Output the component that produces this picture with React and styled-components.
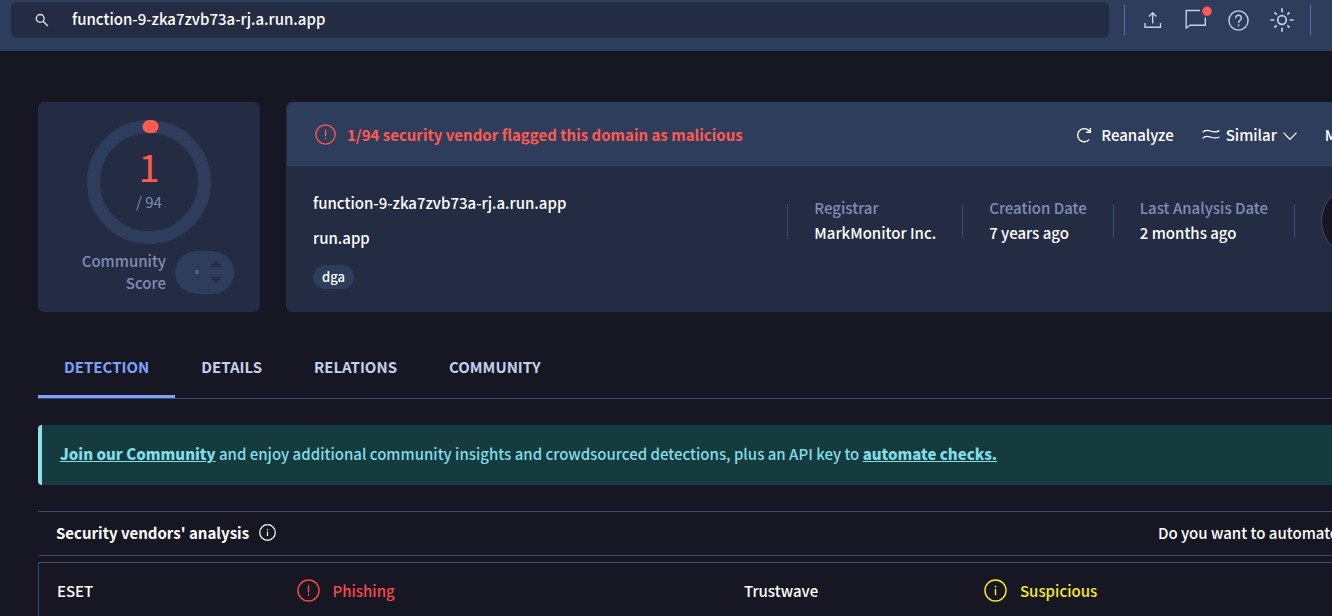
import React from "react";
import styled, { createGlobalStyle, css } from "styled-components";

const color = {
  page: "#171723",
  panel: "#242c43",
  bar: "#2e3d5c",
  line: "#3e4a69",
  muted: "#7f8db3",
  soft: "#c3cfeb",
  accent: "#7ea2fb",
  red: "#ff5a50",
  redText: "#f8474b",
  yellow: "#f7ea2d",
  teal: "#163b3e",
  tealText: "#83dde5",
};

const GlobalStyle = createGlobalStyle`
  * { box-sizing: border-box; }
  body {
    margin: 0;
    background: ${color.page};
    color: #fff;
    font-family: "Noto Sans CJK SC", "Noto Sans", sans-serif;
    font-size: 15px;
    font-weight: 500;
    line-height: 24px;
    overflow-x: hidden;
  }
  button, input { font: inherit; color: inherit; }
  svg { display: block; flex: none; }
`;

const Header = styled.header`
  display: flex;
  align-items: center;
  gap: 15px;
  padding: 2px 21px 13px 11px;
  background: ${color.bar};
`;

const SearchBox = styled.label`
  flex: 1;
  display: flex;
  align-items: center;
  gap: 23px;
  height: 36px;
  padding: 0 24px;
  border-radius: 6px;
  background: ${color.panel};
`;

const SearchInput = styled.input`
  flex: 1;
  min-width: 0;
  padding: 0 0 2px;
  border: 0;
  outline: 0;
  background: transparent;
`;

const HeaderActions = styled.div`
  display: flex;
  align-items: center;
  justify-content: space-between;
  width: 187px;
  height: 30px;
  padding: 0 16px 0 19px;
  border: solid #5f73a8;
  border-width: 0 1px;
  color: ${color.soft};
`;

const IconButton = styled.button`
  display: flex;
  padding: 0;
  border: 0;
  background: none;
  cursor: pointer;
`;

const Clip = styled.div`
  overflow: hidden;
`;

const Main = styled.main`
  width: calc(100% + 120px);
  padding: 51px 38px 0;
`;

const Summary = styled.section`
  display: flex;
  gap: 26px;
`;

const ScoreCard = styled.div`
  flex: none;
  width: 222px;
  height: 210px;
  padding: 18px 26px;
  border-radius: 6px;
  background: ${color.panel};
`;

const Gauge = styled.div`
  display: grid;
  place-items: center;
  > * { grid-area: 1 / 1; }
`;

const GaugeText = styled.div`
  display: flex;
  flex-direction: column;
  align-items: center;
  gap: 2px;
  padding-bottom: 6px;
  color: ${color.muted};
  font-weight: 400;
`;

const GaugeValue = styled.span`
  color: ${color.red};
  font-size: 38px;
  line-height: 44px;
`;

const Community = styled.div`
  display: flex;
  align-items: center;
  justify-content: flex-end;
  gap: 9px;
  margin-top: 6px;
  color: ${color.muted};
  line-height: 22px;
  text-align: right;
`;

const Votes = styled.div`
  display: flex;
  align-items: center;
  gap: 11px;
  width: 59px;
  height: 43px;
  padding-left: 20px;
  border-radius: 22px;
  background: ${color.bar};
`;

const Dot = styled.span`
  width: 4px;
  height: 4px;
  border-radius: 50%;
  background: #5c6880;
`;

const DetailCard = styled.div`
  flex: 1;
  border: 1px solid ${color.bar};
  border-color: ${color.bar} ${color.panel} ${color.panel};
  border-radius: 6px;
  background: ${color.panel};
`;

const DetailHeader = styled.div`
  display: flex;
  align-items: center;
  justify-content: space-between;
  height: 63px;
  padding: 0 32px 0 28px;
  border-radius: 5px 5px 0 0;
  background: ${color.bar};
  line-height: 22px;
`;

const Verdict = styled.div`
  display: flex;
  align-items: center;
  gap: 11px;
  color: ${color.red};
  font-weight: 700;
`;

const Actions = styled.div`
  display: flex;
  gap: 28px;
`;

const ActionButton = styled.button`
  display: flex;
  align-items: center;
  gap: ${(p) => p.$gap}px;
  padding: 0;
  border: 0;
  background: none;
  cursor: pointer;
`;

const DetailBody = styled.div`
  display: flex;
  justify-content: space-between;
  padding: 25px 20px 0 26px;
`;

const Domain = styled.div`
  display: flex;
  flex-direction: column;
  align-items: flex-start;
  gap: 11px;
`;

const Tag = styled.span`
  margin-top: 4px;
  padding: 0 9px;
  border-radius: 12px;
  background: ${color.bar};
  font-size: 13px;
`;

const Facts = styled.div`
  display: flex;
  align-items: center;
  gap: 26px;
  height: 60px;
`;

const Rule = styled.span`
  width: 1px;
  height: 35px;
  background: ${color.line};
`;

const Fact = styled.div`
  padding-bottom: 2px;
  line-height: 25px;
`;

const FactLabel = styled.div`
  color: ${color.muted};
`;

const TypeBadge = styled.div`
  width: 72px;
  height: 72px;
  border: 1px solid ${color.line};
  border-radius: 50%;
  background: ${color.page};
`;

const Tabs = styled.nav`
  display: flex;
  margin-top: 25px;
  border-bottom: 1px solid ${color.line};
`;

const Tab = styled.a`
  height: 61px;
  padding: 18px 26px 0;
  color: ${color.soft};
  font-weight: 700;
  text-decoration: none;
  ${(p) =>
    p.$active &&
    css`
      border-bottom: 3px solid ${color.accent};
      color: ${color.accent};
    `}
`;

const Banner = styled.p`
  margin: 26px 0;
  padding: 17px 18px 19px;
  border-left: 4px solid #90dfe6;
  border-radius: 4px;
  background: ${color.teal};
  color: ${color.tealText};
  white-space: nowrap;
`;

const BannerLink = styled.a`
  color: inherit;
  font-weight: 900;
  text-decoration: underline;
`;

const SectionHeader = styled.div`
  display: flex;
  align-items: center;
  justify-content: space-between;
  height: 45px;
  padding: 0 16px 2px 18px;
  border: solid ${color.line};
  border-width: 1px 0;
  line-height: 22px;
`;

const SectionTitle = styled.h2`
  display: flex;
  align-items: center;
  gap: 10px;
  margin: 0;
  font-size: 15px;
  font-weight: 700;
`;

const Results = styled.table`
  width: 100%;
  margin-top: 6px;
  border: 1px solid ${color.line};
  border-collapse: collapse;
  table-layout: fixed;
`;

const Cell = styled.td`
  width: ${(p) => (p.$name ? "240px" : "auto")};
  height: 56px;
  padding: 0 18px;
`;

const Status = styled.span`
  display: flex;
  align-items: center;
  gap: 13px;
  color: ${(p) => p.$color};
`;

const CircleIcon = ({ size, info, width = 1.5 }) => (
  <svg width={size} height={size} viewBox="0 0 24 24" fill="none" stroke="currentColor" strokeWidth={width}>
    <circle cx="12" cy="12" r="11" />
    {info ? <path d="M12 10.5v6.5M12 7v1.8" /> : <path d="M12 6.5v7.5M12 15.6v1.8" />}
  </svg>
);

const Chevron = () => (
  <svg width="14" height="12" viewBox="0 0 14 12" fill="none" stroke="currentColor" strokeWidth="1.2">
    <path d="M.5 3.600 7 10.300l6.500-6.700" />
  </svg>
);

const SearchIcon = () => (
  <svg width="14" height="14" viewBox="0 0 14 14" fill="none" stroke="#e6ebf7" strokeWidth="1.3">
    <circle cx="5.2" cy="5.4" r="3.9" />
    <path d="m8.1 8.3 4.7 4.7" />
  </svg>
);

const UploadIcon = () => (
  <svg width="20" height="20" viewBox="0 0 20 20" fill="none" stroke="currentColor" strokeWidth="1.4">
    <path d="M1 13v4.300h15.500V13M8.700 13.500V3M5 6.500 8.700 2.800l3.700 3.700" />
  </svg>
);

const MessageIcon = () => (
  <svg width="21" height="28" viewBox="0 0 21 28" fill="none" stroke="currentColor" strokeWidth="1.4" overflow="visible">
    <path d="M15 4.500H1.200v17.700L5 19.300h15.300V11.500" />
    <circle cx="22" cy="5.300" r="4.700" fill={color.red} stroke="none" />
  </svg>
);

const HelpIcon = () => (
  <svg width="21" height="21" viewBox="0 0 21 21" fill="none" stroke="currentColor" strokeWidth="1.4">
    <circle cx="10.5" cy="10.5" r="9.6" />
    <path d="M7.6 8.2c0-1.9 1.2-3 2.9-3s2.9 1.1 2.9 2.8c0 2.3-2.8 2.3-2.8 4.9M10.6 14.6v1.7" />
  </svg>
);

const SunIcon = () => (
  <svg width="24" height="24" viewBox="0 0 24 24" fill="none" stroke="currentColor" strokeWidth="1.7">
    <circle cx="12" cy="12" r="4.3" />
    <path d="M12 .3v4M12 19.7v4M.3 12h4M19.7 12h4M4.4 4.4l2.3 2.3M17.3 17.3l2.3 2.3M4.4 19.6l2.3-2.3M17.3 6.7l2.3-2.3" />
  </svg>
);

const ReloadIcon = () => (
  <svg width="16" height="16" viewBox="0 0 16 16" fill="none" stroke="currentColor" strokeWidth="1.4">
    <path d="M13.2 12.6A6.6 6.6 0 1 1 13 3.6l1 1.2M14.4 1v4.2h-4.2" />
  </svg>
);

const SimilarIcon = () => (
  <svg width="18" height="11" viewBox="0 0 18 11" fill="none" stroke="currentColor" strokeWidth="1.3">
    <path d="M.6 3.200C3 .9 5.400 1 8.400 2s6 1.600 9-.4M.6 9.200c2.400-2.300 4.800-2.200 7.800-1.200s6 1.600 9 0" />
  </svg>
);

const App = () => (
  <>
    <GlobalStyle />
    <Header>
      <SearchBox>
        <SearchIcon />
        <SearchInput aria-label="Search" defaultValue="function-9-zka7zvb73a-rj.a.run.app" />
      </SearchBox>
      <HeaderActions>
        <IconButton aria-label="Upload"><UploadIcon /></IconButton>
        <IconButton aria-label="Messages"><MessageIcon /></IconButton>
        <IconButton aria-label="Help"><HelpIcon /></IconButton>
        <IconButton aria-label="Theme"><SunIcon /></IconButton>
      </HeaderActions>
    </Header>
    <Clip>
      <Main>
        <Summary>
          <ScoreCard>
            <Gauge>
              <svg width="124" height="124" viewBox="0 0 124 124" fill="none" strokeWidth="13">
                <circle cx="62" cy="62" r="55.5" stroke={color.bar} />
                <path d="M62 6.500a55.500 55.500 0 0 1 3.100.1" stroke={color.red} strokeLinecap="round" />
              </svg>
              <GaugeText>
                <GaugeValue>1</GaugeValue>
                <span>/ 94</span>
              </GaugeText>
            </Gauge>
            <Community>
              <div>Community<br />Score</div>
              <Votes>
                <Dot />
                <svg width="12" height="22" viewBox="0 0 12 22" fill={color.panel}>
                  <path d="M0 6 6 0l6 6zM0 16h12l-6 6z" />
                </svg>
              </Votes>
            </Community>
          </ScoreCard>
          <DetailCard>
            <DetailHeader>
              <Verdict>
                <CircleIcon size={21} />
                1/94 security vendor flagged this domain as malicious
              </Verdict>
              <Actions>
                <ActionButton $gap={9}><ReloadIcon />Reanalyze</ActionButton>
                <ActionButton $gap={6}><SimilarIcon />Similar<Chevron /></ActionButton>
                <ActionButton $gap={6}>More<Chevron /></ActionButton>
              </Actions>
            </DetailHeader>
            <DetailBody>
              <Domain>
                <span>function-9-zka7zvb73a-rj.a.run.app</span>
                <span>run.app</span>
                <Tag>dga</Tag>
              </Domain>
              <Facts>
                <Rule />
                <Fact><FactLabel>Registrar</FactLabel>MarkMonitor Inc.</Fact>
                <Rule />
                <Fact><FactLabel>Creation Date</FactLabel>7 years ago</Fact>
                <Rule />
                <Fact><FactLabel>Last Analysis Date</FactLabel>2 months ago</Fact>
                <Rule />
                <TypeBadge />
              </Facts>
            </DetailBody>
          </DetailCard>
        </Summary>
        <Tabs>
          <Tab href="#detection" $active>DETECTION</Tab>
          <Tab href="#details">DETAILS</Tab>
          <Tab href="#relations">RELATIONS</Tab>
          <Tab href="#community">COMMUNITY</Tab>
        </Tabs>
        <Banner>
          <BannerLink href="#join">Join our Community</BannerLink> and enjoy additional community insights and
          crowdsourced detections, plus an API key to <BannerLink href="#automate">automate checks.</BannerLink>
        </Banner>
        <SectionHeader>
          <SectionTitle>Security vendors' analysis <CircleIcon size={17} info width={1.7} /></SectionTitle>
          <span>Do you want to automate checks?</span>
        </SectionHeader>
        <Results>
          <tbody>
            <tr>
              <Cell $name>ESET</Cell>
              <Cell><Status $color={color.redText}><CircleIcon size={23} />Phishing</Status></Cell>
              <Cell $name>Trustwave</Cell>
              <Cell><Status $color={color.yellow}><CircleIcon size={23} info />Suspicious</Status></Cell>
            </tr>
          </tbody>
        </Results>
      </Main>
    </Clip>
  </>
);

export default App;
